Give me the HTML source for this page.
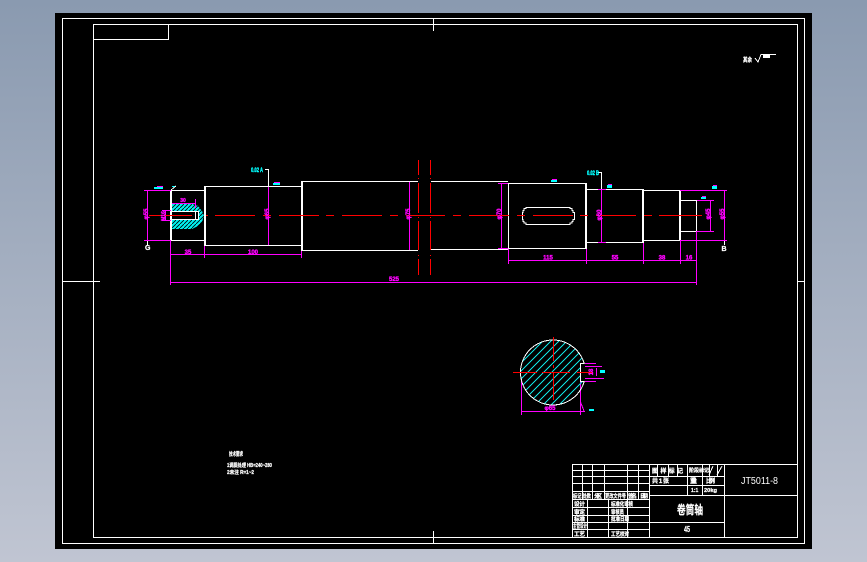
<!DOCTYPE html>
<html><head><meta charset="utf-8"><title>JT5011-8</title>
<style>
html,body{margin:0;padding:0;width:867px;height:562px;overflow:hidden;background:linear-gradient(180deg,#8a9ab0 0%,#c0c5d2 100%)}
svg{position:absolute;left:0;top:0;display:block}
text{font-family:"Liberation Sans","Noto Sans CJK SC",sans-serif;font-weight:bold}
.m text{fill:#f0f;stroke:#f0f;stroke-width:.35;font-size:6px;text-anchor:middle}
.w text{fill:#fff;stroke:#fff;stroke-width:.25}
</style></head><body>
<svg width="867" height="562" viewBox="0 0 867 562" xmlns="http://www.w3.org/2000/svg">
<defs>
<clipPath id="c"><path d="M584.200 363.500A32.500 32.500 0 1 0 584.200 381.500H580.500V363.500Z"/></clipPath>
<pattern id="h" width="4" height="4" patternUnits="userSpaceOnUse"><rect width="4" height="4" fill="#00f0f0"/><path d="M0 4L4 0" stroke="#000" stroke-width=".8"/></pattern>
</defs>
<rect x="55" y="13" width="757" height="536" fill="#000"/>
<g shape-rendering="crispEdges" fill="none">
<!-- frames -->
<path stroke="#fff" d="M62.500 18.500H804.500V543.500H62.500ZM93.500 24.500H797.500V537.500H93.500ZM93.500 39.500H168.500V24.500M433.500 18.500V31M433.500 531V543.500M62 281.500H100M797 281.500H805"/>
<!-- shaft -->
<path stroke="#fff" d="M171.500 190.500H204.500M171.500 240.500H204.500M205 186.500H301M205 245.500H301M302 181.500H418M302 250.500H418M431 181.500H508M431 249.500H508M508.500 183.500H586M508.500 248.500H586M587 189.500H642M587 242.500H642M644 190.500H679M644 240.500H679M680 200.500H696.500V231.500H680"/>
<path stroke="#fff" stroke-width="2" d="M171 190V241M205 186V246M302 181V251M586 183V249M643 189V243M680 190V241"/>
<path stroke="#fff" d="M508.500 183V249"/>
<path stroke="#fff" d="M528 207.500H568M528 224.500H568M568 207.500H570V208.500H572V210.500H573V212.500H574.500V219.500H573V221.500H572V223H570V224.500H568M528 207.500H526V208.500H524V210.500H523V212.500H522.500V219.500H523V221.500H524V223H526V224.500H528"/>
<!-- hatch left end -->
<path fill="url(#h)" stroke="none" d="M172 204H192L198 206L202 211L204 216L202 222L198 226L192 229H172V220H198V211H172Z"/>
<path stroke="#fff" d="M172 211.500H198.500V219.500H172M195.500 212V219"/>
<!-- magenta dims -->
<g stroke="#f0f">
<path d="M144 190.500H171M144 240.500H171M147.500 190V241M170.500 241V285M170.500 282.500H696.500M696.500 231V285M170.500 254.500H301.500M204.500 246V258M301.500 251V258M508.500 249V264M508.500 260.500H696.500M586.500 249V264M643.500 243V264M680.500 241V264"/>
<path d="M268.500 187V245M409.500 182V250M501.500 184V248M601.500 190V242M710.500 201V231M724.500 191V240M680 190.500H727M680 240.500H727M697 200.500H714M697 231.500H714"/>
<path d="M162 210.500H171M162 220.500H171M165.500 210V221M172 203.500H196M195.500 199V208M498 183.500H508M498 248.500H508M598 189.500H606M598 242.500H606"/>
<!-- section dims -->
<path d="M521.500 380V415M580.500 382V415M521 411.500H585M585 363.500H596M585 381.500H596M585 366.500H602M585 378.500H604M596.500 368V376M580.500 402L584 411"/>
</g>
<!-- cyan roughness marks -->
<g fill="#0ff" stroke="none">
<rect x="154" y="187" width="9" height="2"/><rect x="273" y="183" width="7" height="2"/><rect x="551" y="180" width="6" height="2"/>
<rect x="607" y="185" width="5" height="3"/><rect x="712" y="186" width="5" height="3"/><rect x="701" y="197" width="5" height="2"/>
<rect x="600" y="370" width="5" height="3"/><rect x="589" y="409" width="5" height="2"/>
<rect x="172" y="186" width="3" height="1"/>
</g>
<g fill="#f0f" stroke="none">
<rect x="157" y="186" width="6" height="1"/><rect x="274" y="182" width="6" height="1"/><rect x="552" y="179" width="5" height="1"/>
<rect x="608" y="184" width="4" height="1"/><rect x="713" y="185" width="4" height="1"/><rect x="702" y="196" width="4" height="1"/>
</g>
<path stroke="#fff" d="M265 169.500H268.500V186M598 172.500H601.500V189"/>
<!-- red -->
<path stroke="#f00" d="M149 215.500H192M206 215.500H208M215 215.500H255M263 215.500H271M279 215.500H319M326 215.500H334M342 215.500H382M390 215.500H398M406 215.500H445M453 215.500H461M469 215.500H509M517 215.500H525M533 215.500H573M580 215.500H588M596 215.500H636M644 215.500H652M659 215.500H702"/>
<path stroke="#f00" d="M418.500 160V175M418.500 178V179M418.500 183V213M418.500 217V218M418.500 221V250M418.500 255V256M418.500 259V275M430.500 160V175M430.500 178V179M430.500 183V213M430.500 217V218M430.500 221V250M430.500 255V256M430.500 259V275"/>
<!-- title block -->
<g stroke="#fff">
<path d="M572.500 464.500H797M572.500 470.500H649M572.500 476.500H724M572.500 483.500H649M572.500 491.500H649M572.500 499.500H649M572.500 507.500H649M572.500 515.500H649M572.500 522.500H724M572.500 529.500H649M649 485.500H724M649 495.500H797M572.500 464V537"/>
<path d="M582.500 464V499M592.500 464V499M604.500 464V499M627.500 464V499M638.500 464V499M649.500 464V537M587.500 499V537M608.500 499V537M627.500 499V537M724.500 464V537M657.500 464V476M668.500 464V476M677.500 464V476M687.500 464V495M702.500 464V495M709.500 464V476M717.500 464V476"/>
</g>
</g>
<!-- circle -->
<g clip-path="url(#c)" stroke="#10e0e0" shape-rendering="crispEdges">
<path d="M505 395L561 339M505 403L569 339M505 411L577 339M513 411L585 339M521 411L593 339M529 411L601 339M537 411L609 339M545 411L617 339M553 411L625 339M561 411L633 339M505 387L553 339M505 379L545 339M505 371L537 339M505 363L529 339"/>
</g>
<path fill="none" stroke="#fff" shape-rendering="crispEdges" d="M584.200 363.500A32.500 32.500 0 1 0 584.200 381.500H580.500V363.500Z"/>
<path fill="none" stroke="#f00" shape-rendering="crispEdges" d="M513 372.500H537M542 372.500H570M577 372.500H593M553.500 337V361M553.500 365V368M553.500 372V400"/>
<!-- leaders -->
<path fill="none" stroke="#fff" shape-rendering="crispEdges" d="M171 190L176 186M147.500 241V245M724.500 241V245"/>
<!-- dimension text -->
<g class="m">
<text transform="translate(148,214) rotate(-90)">φ55</text>
<text transform="translate(165,216) rotate(-90)" style="font-size:5px">M16</text>
<text transform="translate(269,214) rotate(-90)">φ65</text>
<text transform="translate(410,214) rotate(-90)">φ75</text>
<text transform="translate(501,214) rotate(-90)">φ70</text>
<text transform="translate(601,215) rotate(-90)">φ60</text>
<text transform="translate(710,214) rotate(-90)">φ45</text>
<text transform="translate(724,214) rotate(-90)">φ55</text>
<text x="183" y="202" style="font-size:5px">30</text>
<text x="188" y="254">35</text>
<text x="253" y="254">100</text>
<text x="394" y="281">525</text>
<text x="548" y="259.500">115</text>
<text x="615" y="259.500">55</text>
<text x="662" y="259.500">38</text>
<text x="689" y="259.500">16</text>
<text x="550" y="410">φ65</text>
<text transform="translate(593,372) rotate(-90)">18</text>
</g>
<g fill="#0ff" stroke="#0ff" stroke-width=".4">
<text x="251" y="172" font-size="6" textLength="12" lengthAdjust="spacingAndGlyphs">0.02 A</text>
<text x="587" y="175" font-size="6" textLength="12" lengthAdjust="spacingAndGlyphs">0.02 B</text>
</g>
<!-- text -->
<g class="w" fill="#fff">
<text x="145" y="250" font-size="7">G</text>
<text x="721.500" y="251" font-size="7">B</text>
<text x="743" y="62" font-size="6" textLength="9" lengthAdjust="spacingAndGlyphs">其余</text>
<text x="229" y="456" font-size="5.500" textLength="14" lengthAdjust="spacingAndGlyphs">技术要求</text>
<text x="227" y="467" font-size="5" textLength="45" lengthAdjust="spacingAndGlyphs">1调质处理 HB=240~280</text>
<text x="227" y="474" font-size="5" textLength="27" lengthAdjust="spacingAndGlyphs">2未注 R=1~2</text>
<text x="741" y="484" font-size="10" textLength="37" lengthAdjust="spacingAndGlyphs" style="font-weight:normal;stroke:none">JT5011-8</text>
<text x="677" y="514" font-size="12" textLength="26" lengthAdjust="spacingAndGlyphs">卷筒轴</text>
<text x="684" y="532" font-size="8" textLength="6" lengthAdjust="spacingAndGlyphs">45</text>
<g font-size="6">
<text x="652" y="473" textLength="31" lengthAdjust="spacing">图 样 标 记</text>
<text x="689" y="472" font-size="5" textLength="20" lengthAdjust="spacingAndGlyphs">阶段标记</text>
<text x="652" y="483" textLength="17">共 1 张</text>
<text x="690" y="483" textLength="7">重量</text><text x="706" y="483" textLength="9">比例</text>
<text x="691" y="492" font-size="5">1:1</text><text x="704" y="492" font-size="5" textLength="13" lengthAdjust="spacingAndGlyphs">20kg</text>
</g>
<g font-size="5.600">
<text x="573" y="498" textLength="18" lengthAdjust="spacingAndGlyphs">标记 处数</text><text x="594" y="498" textLength="8">分区</text><text x="605" y="498" textLength="21" lengthAdjust="spacingAndGlyphs">更改文件号</text><text x="628" y="498" textLength="9">签名</text><text x="640" y="498" textLength="8">日期</text>
<text x="574" y="506" textLength="11">设 计</text><text x="574" y="514" textLength="11">审 定</text><text x="574" y="521" textLength="11">标 准</text><text x="573" y="528" textLength="14" lengthAdjust="spacingAndGlyphs">主管设计</text><text x="574" y="536" textLength="11">工 艺</text>
<text x="611" y="506" textLength="22" lengthAdjust="spacingAndGlyphs">标准化审核</text><text x="611" y="514" textLength="13" lengthAdjust="spacingAndGlyphs">审核员</text><text x="611" y="521" textLength="18" lengthAdjust="spacingAndGlyphs">批准日期</text><text x="611" y="536" textLength="18" lengthAdjust="spacingAndGlyphs">工艺校对</text>
</g>
</g>
<path fill="none" stroke="#fff" shape-rendering="crispEdges" d="M755 58L758 62L761 54.500H776M709 475L713 466M717 475L722 466"/>
<g fill="#fff"><rect x="763" y="55" width="7" height="3"/></g>
</svg>
</body></html>
